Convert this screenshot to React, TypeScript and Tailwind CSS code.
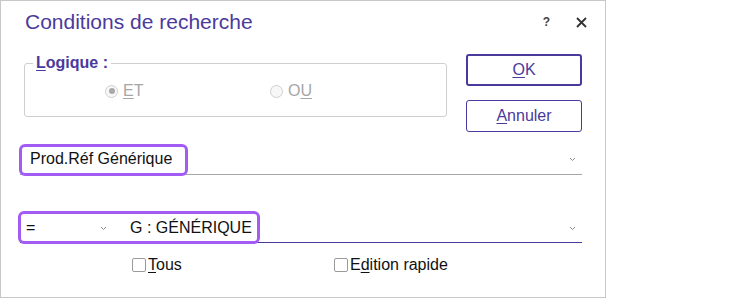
const Chevron = () => (
  <svg width="7" height="5" viewBox="0 0 7 5" className="shrink-0">
    <polyline points="1,1 3.5,3.5 6,1" fill="none" stroke="#8a8a8a" strokeWidth="1" />
  </svg>
);

const Radio = ({ checked, label }: { checked?: boolean; label: React.ReactNode }) => (
  <div className="flex items-center gap-[5px]">
    <span className="w-[13px] h-[13px] rounded-full border border-[#d0d0d0] bg-[#f7f7f7] flex items-center justify-center">
      {checked && <span className="w-[6px] h-[6px] rounded-full bg-[#a8a8a8]" />}
    </span>
    <span className="text-[16px] leading-[18px] text-[#a6a6a6]">{label}</span>
  </div>
);

const Checkbox = ({ label }: { label: React.ReactNode }) => (
  <div className="flex items-center gap-[2px]">
    <span className="w-[14px] h-[14px] border border-[#9a9a9a] rounded-[2px] bg-white" />
    <span className="text-[16px] leading-[16px] text-[#111]">{label}</span>
  </div>
);

export default function App() {
  return (
    <div className="w-[755px] h-[298px] bg-white font-['Liberation_Sans',Arial,sans-serif]">
      <div className="w-[606px] h-[298px] border border-[#c8c8c8] pl-[19px] pr-[23px] flex flex-col">
        {/* header */}
        <div className="h-[53px] flex items-start pt-[9px]">
          <h1 className="ml-[5px] text-[21px] leading-[24px] text-[#4b3a9c]">Conditions de recherche</h1>
          <span className="ml-auto mt-[5px] text-[12px] leading-[14px] font-bold text-[#444]">?</span>
          <svg width="11" height="11" viewBox="0 0 11 11" className="ml-[26px] -mr-[5px] mt-[7px]">
            <path d="M1 1 L10 10 M10 1 L1 10" stroke="#333" strokeWidth="1.8" />
          </svg>
        </div>

        {/* logique + buttons */}
        <div className="flex items-start">
          <fieldset className="ml-[4px] w-[423px] border border-[#cfcfcf] rounded-[3px]">
            <legend className="ml-[8px] px-[3px] text-[16px] leading-[18px] font-bold text-[#4b3a9c]">
              <u className="underline-offset-2">L</u>ogique :
            </legend>
            <div className="h-[44px] pt-[10px] pl-[80px] flex items-start">
              <div className="w-[165px]">
                <Radio checked label={<><u className="underline-offset-2">E</u>T</>} />
              </div>
              <Radio label={<>O<u className="underline-offset-2">U</u></>} />
            </div>
          </fieldset>
          <div className="ml-auto w-[116px] flex flex-col gap-[14px]">
            <button className="h-[32px] border-2 border-[#4b3a9c] rounded-[3px] text-[16px] text-[#4b3a9c] bg-white">
              <u className="underline-offset-2">O</u>K
            </button>
            <button className="h-[32px] border border-[#4b3a9c] rounded-[3px] text-[16px] text-[#4b3a9c] bg-white">
              <u className="underline-offset-2">A</u>nnuler
            </button>
          </div>
        </div>

        {/* field 1 */}
        <div className="relative mt-[12px] h-[31px] border-b border-[#a6a6a6] flex items-center pl-[10px] pr-[6px]">
          <span className="text-[16px] leading-[18px] text-[#111]">Prod.Réf Générique</span>
          <span className="ml-auto">
            <Chevron />
          </span>
          <div className="absolute -left-[1px] top-0 w-[169px] h-[32px] border-[3px] border-[#a35cf3] rounded-[6px]" />
        </div>

        {/* field 2 */}
        <div className="relative mt-[36px] h-[32px] border-b border-[#4b3a9c] flex items-center pl-[6px] pr-[6px] pt-[3px]">
          <div className="w-[82px] flex items-center justify-between pr-[1px]">
            <span className="text-[16px] leading-[18px] text-[#111]">=</span>
            <Chevron />
          </div>
          <span className="ml-[22px] text-[16px] leading-[18px] text-[#111]">G : GÉNÉRIQUE</span>
          <span className="ml-auto">
            <Chevron />
          </span>
          <div className="absolute -left-[2px] top-0 w-[242px] h-[33px] border-[3px] border-[#a35cf3] rounded-[6px]" />
        </div>

        {/* checkboxes */}
        <div className="mt-[14px] flex items-center pl-[112px]">
          <div className="w-[202px]">
            <Checkbox label={<><u className="underline-offset-2">T</u>ous</>} />
          </div>
          <Checkbox label={<>E<u className="underline-offset-2">d</u>ition rapide</>} />
        </div>
      </div>
    </div>
  );
}
